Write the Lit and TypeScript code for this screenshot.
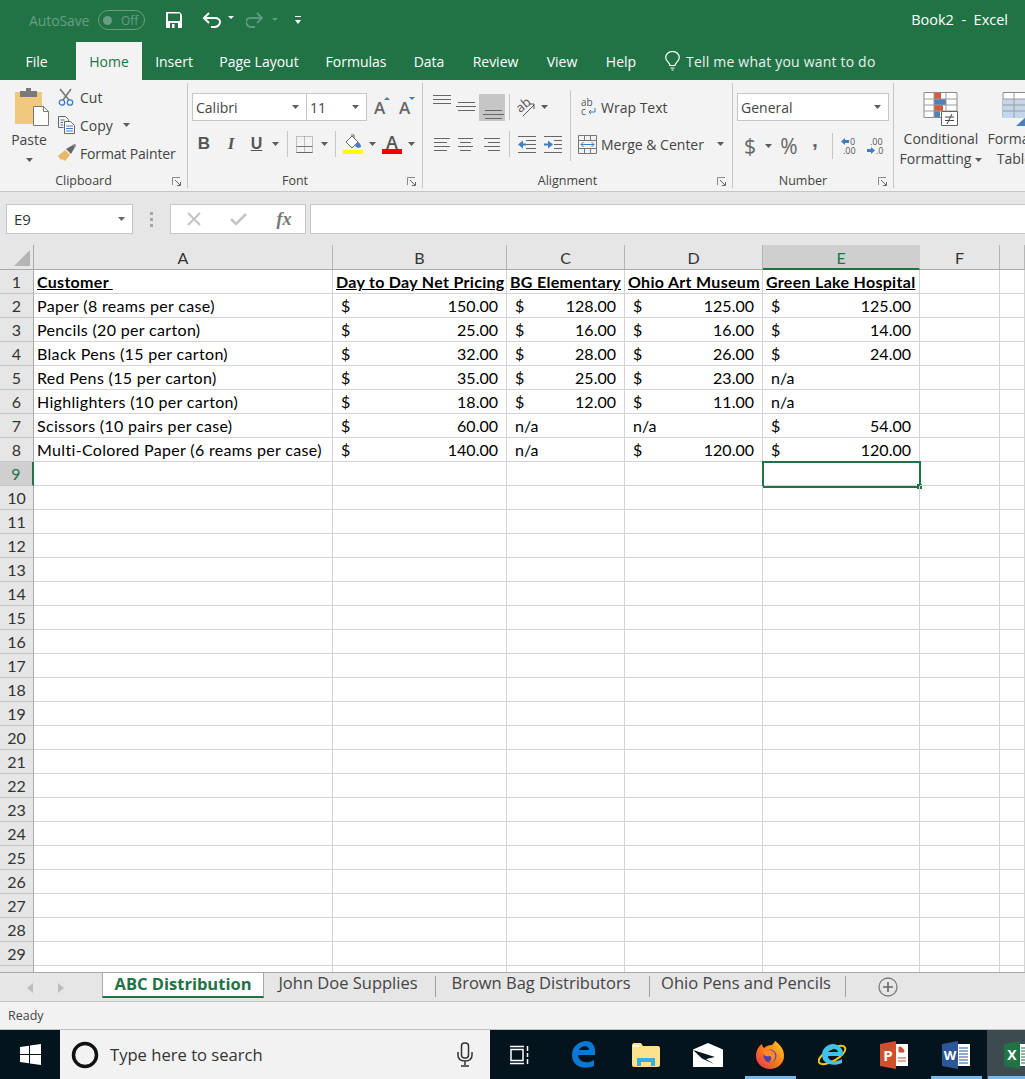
import { LitElement, css, html, svg } from 'lit';
import { customElement } from 'lit/decorators.js';

interface SheetRow {
  name: string;
  cells: (number | null)[];
}

const COLS = ['A', 'B', 'C', 'D', 'E', 'F', 'G'];

const ROWS: SheetRow[] = [
  { name: 'Paper (8 reams per case)', cells: [150, 128, 125, 125] },
  { name: 'Pencils (20 per carton)', cells: [25, 16, 16, 14] },
  { name: 'Black Pens (15 per carton)', cells: [32, 28, 26, 24] },
  { name: 'Red Pens (15 per carton)', cells: [35, 25, 23, null] },
  { name: 'Highlighters (10 per carton)', cells: [18, 12, 11, null] },
  { name: 'Scissors (10 pairs per case)', cells: [60, null, null, 54] },
  { name: 'Multi-Colored Paper (6 reams per case)', cells: [140, null, 120, 120] },
];

const HEADINGS = ['Customer ', 'Day to Day Net Pricing', 'BG Elementary', 'Ohio Art Museum', 'Green Lake Hospital'];

const caret = (fill = '#5c5c5c') => html`<svg class="caret" width="7" height="4" viewBox="0 0 7 4"><path d="M0 0h7L3.5 4z" fill=${fill}></path></svg>`;

const lines = (ys: number[][], w = 26, h = 28) => html`<svg width=${w} height=${h} viewBox="0 0 ${w} ${h}">
  ${ys.map(([x1, x2, y]) => svg`<rect x=${x1} y=${y} width=${x2 - x1} height="1" fill="#666"></rect>`)}
</svg>`;

const launcher = html`<svg class="launcher" width="10" height="10" viewBox="0 0 10 10">
  <path d="M.5 8V.5H8" fill="none" stroke="#8a8a8a"></path><path d="M3 3l5 5M5 8.500h3.500V5" fill="none" stroke="#666"></path>
</svg>`;

@customElement('app-root')
export class AppRoot extends LitElement {
  static styles = css`
    :host {
      display: block;
      width: 1025px;
      height: 1079px;
      overflow: hidden;
      position: relative;
      font-family: 'Open Sans', 'Noto Sans', sans-serif;
      color: #444;
      background: #fff;
    }
    svg { display: block; flex: none; }
    .titlebar {
      height: 40px;
      background: #217346;
      display: flex;
      align-items: center;
      padding: 0 17px 0 29px;
      color: #fff;
      font-size: 14px;
    }
    .autosave { color: #6a9e83; width: 69px; white-space: nowrap; letter-spacing: -0.1px; }
    .toggle {
      width: 47px;
      height: 20px;
      box-sizing: border-box;
      border: 1px solid #6a9e83;
      border-radius: 10px;
      color: #6a9e83;
      font-size: 12px;
      display: flex;
      align-items: center;
      gap: 9px;
      padding-left: 4px;
    }
    .toggle i { width: 9px; height: 9px; border-radius: 50%; background: #6a9e83; }
    .qat { display: grid; grid-template-columns: 36px 44px 26px 23px 6px; margin-left: 21px; align-items: center; justify-items: start; }
    .doc-title { margin-left: auto; white-space: pre; font-size: 14.5px; padding-bottom: 2px; }
    .tabs {
      height: 40px;
      background: #217346;
      display: grid;
      grid-template-columns: 76px 66px 64px 106px 88px 58px 75px 58px 60px 14px auto;
      align-items: end;
      color: #fff;
      font-size: 14px;
    }
    .tab { height: 38px; display: flex; align-items: center; justify-content: center; white-space: nowrap; box-sizing: border-box; }
    .tab.file { padding-right: 3px; }
    .tab.active { background: #f3f3f3; color: #217346; }
    .tell { display: flex; align-items: center; gap: 6px; height: 38px; white-space: nowrap; box-sizing: border-box; color: #e9f1ec; letter-spacing: 0.2px; }
    .ribbon {
      height: 112px;
      box-sizing: border-box;
      padding-top: 3px;
      background: #f3f3f3;
      border-bottom: 1px solid #c6c6c6;
      display: grid;
      grid-template-columns: 188px 235px 310px 161px 131px;
      font-size: 14px;
      color: #444;
    }
    .group {
      height: 105px;
      border-right: 1px solid #c6c6c6;
      box-sizing: border-box;
      display: grid;
      grid-template-rows: 91px 14px;
      position: relative;
    }
    .group.last { border-right: none; overflow: hidden; }
    .group-label { text-align: center; font-size: 12.5px; line-height: 14px; color: #444; padding-right: 20px; }
    .launcher { position: absolute; right: 5px; bottom: 1px; }
    .clip { display: grid; grid-template-columns: 58px auto; }
    .paste { display: flex; flex-direction: column; align-items: center; padding-top: 5px; }
    .paste svg:first-child { margin-left: 6px; }
    .paste span { margin-top: 3px; line-height: 20px; }
    .paste .caret { margin-top: 8px; }
    .small { display: grid; grid-template-rows: repeat(3, 28px); }
    .small div { display: flex; align-items: center; white-space: nowrap; }
    .small svg:first-child { width: 22px; }
    .small .caret { margin-left: 10px; }
    .small .painter { letter-spacing: -0.15px; }
    .rows { padding-top: 10px; display: grid; grid-template-rows: 28px 28px; row-gap: 9px; align-content: start; }
    .combo {
      background: #fff;
      border: 1px solid #c6c6c6;
      box-sizing: border-box;
      height: 28px;
      display: flex;
      align-items: center;
      justify-content: space-between;
      padding: 0 7px 0 3px;
      color: #444;
    }
    .font-top { display: grid; grid-template-columns: 115px 60px 7px 15px 10px 15px; padding-left: 4px; align-items: center; }
    .combo.second { margin-left: -1px; }
    .tools { display: grid; align-items: center; justify-items: center; }
    .font-tools { grid-template-columns: 26px 28px 23px 15px 8px 27px 13px 8px 28px 10px 30px 8px; padding-left: 3px; }
    .b { font-weight: 700; font-size: 17px; color: #555; font-family: 'Liberation Sans', sans-serif; }
    .i { font-style: italic; font-weight: 700; font-size: 17px; color: #555; font-family: 'Liberation Serif', serif; }
    .u { font-weight: 700; font-size: 16px; color: #555; text-decoration: underline; font-family: 'Liberation Sans', sans-serif; }
    .vsep { width: 1px; height: 26px; background: #c6c6c6; }
    .align { display: grid; grid-template-columns: 147px 1px auto; }
    .align-top { grid-template-columns: 24px 25px 27px 8px 26px 10px; padding-left: 6px; justify-content: start; }
    .align-bottom { grid-template-columns: 24px 25px 27px 8px 27px 26px; padding-left: 6px; justify-content: start; }
    .picked { background: #c6c6c6; width: 26px; height: 27px; }
    .tall { width: 1px; height: 71px; margin-top: 7px; background: #c6c6c6; }
    .wrap { display: flex; align-items: center; gap: 5px; padding-left: 10px; white-space: nowrap; }
    .merge { display: flex; align-items: center; gap: 4px; padding-left: 7px; white-space: nowrap; }
    .merge .caret { margin-left: 9px; }
    .num-combo { margin-left: 4px; width: 152px; }
    .num-tools { grid-template-columns: 16px 20px 22px 30px 4px 30px 23px; padding-left: 9px; justify-content: start; }
    .glyph { font-size: 21px; color: #666; line-height: 28px; }
    .comma { font-family: 'Liberation Sans', sans-serif; font-weight: 700; font-size: 21px; color: #666; line-height: 20px; margin-bottom: 12px; }
    .styles { display: grid; grid-template-columns: 94px 64px; justify-content: start; }
    .style-btn { display: flex; flex-direction: column; align-items: center; padding-top: 9px; line-height: 20px; white-space: nowrap; }
    .style-btn svg.big { margin-bottom: 3px; }
    .style-btn .caret { display: inline-block; margin-left: 4px; vertical-align: middle; }
    .fbar {
      height: 53px;
      background: #e6e6e6;
      display: flex;
      padding: 12px 0 0 6px;
      box-sizing: border-box;
    }
    .field { height: 30px; box-sizing: border-box; background: #fff; border: 1px solid #c6c6c6; display: flex; align-items: center; }
    .namebox { width: 127px; justify-content: space-between; padding: 0 7px 0 7px; font-size: 15px; color: #333; }
    .dots { width: 37px; display: flex; flex-direction: column; align-items: center; justify-content: center; gap: 3px; height: 30px; }
    .dots i { width: 3px; height: 3px; background: #a8a8a8; }
    .fbtns { width: 136px; display: grid; grid-template-columns: 45px 45px 46px; justify-items: center; margin-right: 4px; color: #666; }
    .fx { font-family: 'Liberation Serif', serif; font-style: italic; font-weight: 700; font-size: 18px; color: #777; }
    .finput { flex: 1; border-right: none; }
    .sheet {
      height: 727px;
      overflow: hidden;
      display: grid;
      grid-template-columns: 34px 299px 174px 118px 138px 157px 80px 25px;
      grid-auto-rows: 24px;
      grid-template-rows: 25px;
      font-family: Lato, 'Open Sans', sans-serif;
      font-size: 16px;
      color: #000;
      background: #fff;
    }
    .corner { background: #e6e6e6; border-right: 1px solid #a9a9a9; border-bottom: 1px solid #a9a9a9; box-sizing: border-box; padding: 5px 0 0 14px; }
    .colhead {
      background: #e6e6e6;
      border-right: 1px solid #b5b5b5;
      border-bottom: 1px solid #a9a9a9;
      box-sizing: border-box;
      text-align: center;
      line-height: 25px;
      color: #333;
    }
    .colhead.sel { background: #cfcfcf; color: #217346; border-bottom: 2px solid #217346; border-right-color: #cfcfcf; }
    .rowhead {
      background: #e6e6e6;
      border-right: 1px solid #a9a9a9;
      border-bottom: 1px solid #c6c6c6;
      box-sizing: border-box;
      display: flex;
      align-items: center;
      justify-content: center;
      color: #333;
    }
    .rowhead.sel { background: #cfcfcf; color: #217346; border-right: 2px solid #217346; }
    .cell {
      border-right: 1px solid #d4d4d4;
      border-bottom: 1px solid #d4d4d4;
      box-sizing: border-box;
      display: flex;
      align-items: center;
      padding: 0 8px 0 8px;
      white-space: pre;
      position: relative;
    }
    .cell.text { padding-left: 3px; letter-spacing: 0.33px; }
    .cell.head { padding-left: 3px; font-weight: 700; text-decoration: underline; letter-spacing: 0.3px; }
    .money { justify-content: space-between; }
    .selbox {
      position: absolute;
      left: -1px;
      top: -1px;
      right: -2px;
      bottom: -3px;
      border: 2px solid #217346;
      box-sizing: border-box;
    }
    .selbox i {
      position: absolute;
      right: -3px;
      bottom: -3px;
      width: 5px;
      height: 5px;
      background: #217346;
    }
    .sheetbar {
      height: 30px;
      box-sizing: border-box;
      background: #e6e6e6;
      border-top: 1px solid #a9a9a9;
      border-bottom: 1px solid #c6c6c6;
      display: flex;
      font-size: 16.5px;
      color: #444;
    }
    .nav { width: 102px; display: flex; gap: 25px; padding: 10px 0 0 27px; box-sizing: border-box; }
    .stab-list { display: grid; grid-template-columns: 162px 172px 214px 196px auto; align-items: start; }
    .stab-active {
      height: 25px;
      box-sizing: border-box;
      display: flex;
      align-items: center;
      justify-content: center;
      white-space: nowrap;
      padding-bottom: 3px;
      background: #fff;
      border-left: 1px solid #a9a9a9;
      border-right: 1px solid #a9a9a9;
      border-bottom: 2px solid #217346;
      color: #217346;
      font-weight: 700;
    }
    .stab {
      height: 21px;
      margin-top: 3px;
      line-height: 14px;
      box-sizing: border-box;
      text-align: center;
      white-space: nowrap;
      padding-right: 3px;
      border-right: 1px solid #a0a0a0;
    }
    .plus { padding: 4px 0 0 32px; }
    .status {
      height: 27px;
      background: #f2f2f2;
      display: flex;
      align-items: center;
      padding-left: 8px;
      font-size: 12.5px;
      color: #444;
    }
    .taskbar { height: 50px; background: #03141c; border-top: 1px solid #c0c0c0; box-sizing: border-box; display: grid; grid-template-columns: 60px 430px 1px repeat(9, 62px); }
    .start { display: flex; align-items: center; justify-content: center; }
    .search { background: #f2f2f2; display: flex; align-items: center; padding-left: 11px; gap: 11px; font-size: 16.6px; color: #333; }
    .search span { flex: 1; }
    .search svg:last-child { margin-right: 17px; }
    .slot { display: flex; align-items: center; justify-content: center; position: relative; height: 49px; }
    .slot.open::after {
      content: '';
      position: absolute;
      left: 6px;
      right: 5px;
      bottom: 0;
      height: 3px;
      background: #76b9ed;
    }
    .slot.active { background: #3d4a50; }
    .slot.active::after { left: 1px; right: 0; }
    .slot.view { padding-right: 5px; box-sizing: border-box; }
  `;

  private renderRibbon() {
    return html`
      <div class="ribbon">
        <section class="group">
          <div class="clip">
            <div class="paste">
              <svg width="36" height="39" viewBox="0 0 36 39">
                <path d="M1 4h27v32H1z" fill="#f0c97f"></path>
                <path d="M6 3h17v6H6z" fill="#7a7a7a"></path><path d="M12 0h5v4h-5z" fill="#7a7a7a"></path>
                <path d="M19.500 18.500h10l5 5v14h-15z" fill="#fff" stroke="#7a7a7a"></path><path d="M29.500 18.500v5h5" fill="none" stroke="#7a7a7a"></path>
              </svg>
              <span>Paste</span>
              ${caret()}
            </div>
            <div class="small">
              <div>
                <svg viewBox="0 0 22 18" height="18"><path d="M2 1l9 11M13 1L5 12" stroke="#777" stroke-width="1.600" fill="none"></path><circle cx="4" cy="14.500" r="2.700" fill="none" stroke="#3f7fc1" stroke-width="1.300"></circle><circle cx="12" cy="14.500" r="2.700" fill="none" stroke="#3f7fc1" stroke-width="1.300"></circle></svg>
                Cut
              </div>
              <div>
                <svg viewBox="0 0 22 18" height="18"><path d="M.5.500h7l3 3v3M.5.500v11h5" fill="none" stroke="#666"></path><path d="M6.500 5.500h6l4 4v8h-10z" fill="#fff" stroke="#666"></path><path d="M8 10h7M8 12.500h7M8 15h7M2.500 4h4M2.500 6.500h2.500M2.500 9h2.500" stroke="#3f7fc1"></path></svg>
                Copy ${caret()}
              </div>
              <div class="painter">
                <svg viewBox="0 0 22 18" height="18"><path d="M0 12l7-6 5 5-5 6-3-2-1 1z" fill="#e8b866"></path><path d="M8 5l7-4 2 2-4 7z" fill="#666"></path><path d="M14 1l3-1 1 1-1 3z" fill="#888"></path></svg>
                Format Painter
              </div>
            </div>
          </div>
          <div class="group-label">Clipboard</div>
          ${launcher}
        </section>

        <section class="group">
          <div class="rows">
            <div class="font-top">
              <div class="combo"><span>Calibri</span>${caret()}</div>
              <div class="combo second"><span>11</span>${caret()}</div>
              <span></span>
              <svg width="16" height="28" viewBox="0 0 16 28"><text x="0" y="21" font-size="17" font-weight="600" fill="#666" font-family="Open Sans">A</text><path d="M10 7h6l-3-3z" fill="#3f7fc1"></path></svg>
              <span></span>
              <svg width="16" height="28" viewBox="0 0 16 28"><text x="0" y="21" font-size="17" font-weight="600" fill="#666" font-family="Open Sans">A</text><path d="M10 4h6l-3 3z" fill="#3f7fc1"></path></svg>
            </div>
            <div class="tools font-tools">
              <span class="b">B</span><span class="i">I</span><span class="u">U</span>${caret()}
              <div class="vsep"></div>
              <svg width="17" height="17" viewBox="0 0 17 17"><path d="M.5.500h16v16H.500zM8.500.500v16" fill="none" stroke="#8b8b8b" stroke-dasharray="1 1"></path><path d="M.5 10.500h16" stroke="#777"></path><path d="M.5 16.500h16" stroke="#666"></path></svg>
              ${caret()}
              <div class="vsep"></div>
              <svg width="20" height="20" viewBox="0 0 20 20"><path d="M3 8l6-6 6 6-6 6z" fill="#fff" stroke="#666"></path><path d="M8 1h3v3" fill="none" stroke="#666"></path><path d="M15 8c2 1 3 3 3 5l-3 1-3-2z" fill="#3f7fc1"></path><rect y="16" width="20" height="4" fill="#ffff00"></rect></svg>
              ${caret()}
              <svg width="20" height="20" viewBox="0 0 20 20"><text x="10" y="15" text-anchor="middle" font-size="18" font-weight="600" fill="#555" font-family="Open Sans">A</text><rect y="15" width="20" height="5" fill="#f00000"></rect></svg>
              ${caret()}
            </div>
          </div>
          <div class="group-label">Font</div>
          ${launcher}
        </section>

        <section class="group">
          <div class="align">
            <div class="rows">
              <div class="tools align-top">
                ${lines([[5, 23, 2], [5, 23, 6], [5, 23, 10]])}
                ${lines([[5, 22, 9], [3, 23, 13], [5, 22, 17]])}
                <div class="picked">${lines([[6, 23, 16], [4, 25, 20], [6, 23, 24]])}</div>
                <div class="vsep"></div>
                <svg width="20" height="19" viewBox="0 0 20 19"><text x="1" y="12" font-size="13" fill="#555" transform="rotate(-40 7 9)" font-family="Open Sans">ab</text><path d="M7 18L18 7M13 6h5v5" fill="none" stroke="#555"></path></svg>
                ${caret()}
              </div>
              <div class="tools align-bottom">
                ${lines([[6, 22, 8], [6, 19, 12], [6, 22, 16], [6, 19, 20]])}
                ${lines([[5, 20, 8], [7, 18, 12], [5, 20, 16], [7, 18, 20]])}
                ${lines([[5, 21, 8], [9, 21, 12], [5, 21, 16], [9, 21, 20]])}
                <div class="vsep"></div>
                <svg width="18" height="17" viewBox="0 0 18 17"><path d="M0 .5h18M8 4.500h10M8 8.500h10M8 12.500h10M0 16.500h18" stroke="#666"></path><path d="M0 8.500l5-4v3h3v2H5v3z" fill="#3f7fc1"></path></svg>
                <svg width="18" height="17" viewBox="0 0 18 17"><path d="M0 .5h18M10 4.500h8M10 8.500h8M10 12.500h8M0 16.500h18" stroke="#666"></path><path d="M9 8.500l-5-4v3H0v2h4v3z" fill="#3f7fc1"></path></svg>
              </div>
            </div>
            <div class="tall"></div>
            <div class="rows">
              <div class="wrap">
                <svg width="15" height="18" viewBox="0 0 15 18"><text x="0" y="8" font-size="10" fill="#555" font-family="Open Sans">ab</text><text x="0" y="17" font-size="10" fill="#555" font-family="Open Sans">c</text><path d="M14 10v4H8M10 12l-2 2 2 2" fill="none" stroke="#3f7fc1"></path></svg>
                Wrap Text
              </div>
              <div class="merge">
                <svg width="19" height="19" viewBox="0 0 19 19"><path d="M.5.500h18v18H.500zM.5 5.500h18M.5 13.500h18M6.500.500v5M12.500.500v5M6.500 13.500v5M12.500 13.500v5" fill="none" stroke="#777"></path><path d="M3 9.500h13M5.500 7l-2.500 2.500 2.500 2.500M13.500 7l2.500 2.500-2.500 2.500" fill="none" stroke="#3f7fc1"></path></svg>
                Merge &amp; Center ${caret()}
              </div>
            </div>
          </div>
          <div class="group-label">Alignment</div>
          ${launcher}
        </section>

        <section class="group">
          <div class="rows">
            <div class="combo num-combo"><span>General</span>${caret()}</div>
            <div class="tools num-tools">
              <span class="glyph">$</span>${caret()}<span class="glyph">%</span><span class="comma">,</span>
              <div class="vsep"></div>
              <svg width="16" height="18" viewBox="0 0 16 18"><path d="M0 4.500L4 1v2h4v3H4v2z" fill="#3f7fc1"></path><text x="9" y="8" font-size="9" fill="#555" font-family="Open Sans">0</text><text x="2" y="17" font-size="9" fill="#555" font-family="Open Sans">.00</text></svg>
              <svg width="18" height="18" viewBox="0 0 18 18"><text x="3" y="8" font-size="9" fill="#555" font-family="Open Sans">.00</text><path d="M8 13.500L4 10v2H0v3h4v2z" fill="#3f7fc1"></path><text x="9" y="17" font-size="9" fill="#555" font-family="Open Sans">.0</text></svg>
            </div>
          </div>
          <div class="group-label">Number</div>
          ${launcher}
        </section>

        <section class="group last">
          <div class="styles">
            <div class="style-btn">
              <svg class="big" width="36" height="34" viewBox="0 0 36 34">
                <path d="M1 .5h33v25H1z" fill="#fff" stroke="#8a8a8a"></path>
                <path d="M11 1h7v6h-7z" fill="#d9593c"></path><path d="M11 7h12v6H11z" fill="#4d82b8"></path>
                <path d="M11 13h9v6h-9z" fill="#d9593c"></path><path d="M11 19h6v6h-6z" fill="#4d82b8"></path>
                <path d="M1 7h33M1 13h33M1 19h33M11 1v25M23 1v25" fill="none" stroke="#9b9b9b"></path>
                <path d="M18.500 19.500h16v14h-16z" fill="#fff" stroke="#666"></path>
                <path d="M22 25h9M22 28.500h9M29 22l-5 10" stroke="#444" fill="none"></path>
              </svg>
              <span>Conditional</span>
              <span>Formatting${caret()}</span>
            </div>
            <div class="style-btn">
              <svg class="big" width="36" height="34" viewBox="0 0 36 34">
                <path d="M1 .5h34v25H1z" fill="#fff" stroke="#8a8a8a"></path><path d="M1 7h34v19H1z" fill="#c3d7ea"></path>
                <path d="M1 7h34M1 13h34M1 19h34M12 1v25M24 1v25" stroke="#9b9b9b" fill="none"></path>
                <path d="M14 34l12-11 10 8v3z" fill="#4d82b8"></path>
              </svg>
              <span>Format as</span>
              <span>Table${caret()}</span>
            </div>
          </div>
        </section>
      </div>
    `;
  }

  private renderSheet() {
    const rowNumbers = Array.from({ length: 30 }, (_, i) => i + 1);
    return html`
      <div class="sheet">
        <div class="corner"><svg width="16" height="16" viewBox="0 0 16 16"><path d="M16 0v16H0z" fill="#b4b4b4"></path></svg></div>
        ${COLS.map((c) => html`<div class="colhead ${c === 'E' ? 'sel' : ''}">${c === 'G' ? '' : c}</div>`)}
        ${rowNumbers.map((n) => this.renderRow(n))}
      </div>
    `;
  }

  private renderRow(n: number) {
    const head = html`<div class="rowhead ${n === 9 ? 'sel' : ''}">${n}</div>`;
    if (n === 1) {
      return html`${head}
        ${HEADINGS.map((h) => html`<div class="cell head">${h}</div>`)}
        <div class="cell"></div><div class="cell"></div>`;
    }
    const data = ROWS[n - 2];
    if (!data) {
      return html`${head}
        ${COLS.map((_, i) => html`<div class="cell">${n === 9 && i === 4 ? html`<div class="selbox"><i></i></div>` : ''}</div>`)}`;
    }
    return html`${head}
      <div class="cell text">${data.name}</div>
      ${data.cells.map((v) =>
        v === null
          ? html`<div class="cell">n/a</div>`
          : html`<div class="cell money"><span>$</span><span>${v.toFixed(2)}</span></div>`,
      )}
      <div class="cell"></div><div class="cell"></div>`;
  }

  private renderTaskbar() {
    return html`
      <div class="taskbar">
        <div class="start">
          <svg width="21" height="21" viewBox="0 0 21 21"><path d="M0 3l9-1.300V10H0zM10 1.500L21 0v10H10zM0 11h9v8.300L0 18zM10 11h11v10l-11-1.500z" fill="#fff"></path></svg>
        </div>
        <div class="search">
          <svg width="28" height="28" viewBox="0 0 28 28"><circle cx="14" cy="14" r="11.500" fill="none" stroke="#111" stroke-width="3.500"></circle></svg>
          <span>Type here to search</span>
          <svg width="16" height="26" viewBox="0 0 16 26"><rect x="4.500" y="1" width="7" height="15" rx="3" fill="none" stroke="#333" stroke-width="1.500"></rect><path d="M1 10v3c0 4 3 6 7 6s7-2 7-6v-3M8 19v4M4 24h8" fill="none" stroke="#333" stroke-width="1.500"></path></svg>
        </div>
        <div></div>
        <div class="slot view">
          <svg width="20" height="20" viewBox="0 0 20 20"><path d="M1 4.500h12v11H1zM0 1.500h14M0 18.500h14M17.500 1v5M17.500 8v4M17.500 14v5" fill="none" stroke="#fff" stroke-width="1.500"></path></svg>
        </div>
        <div class="slot">
          <svg width="26" height="27" viewBox="0 0 26 27"><path d="M24 14H7c0 6 8 10 16 5v6c-10 4-22 1-22-11C1 5 9 0 15 0c7 0 10 6 9 14zM8 9h10c0-5-8-5-10 0z" fill="#0a78d4"></path></svg>
        </div>
        <div class="slot">
          <svg width="28" height="24" viewBox="0 0 28 24"><path d="M0 2c0-1 1-2 2-2h7l2 3h15c1 0 2 1 2 2v17c0 1-1 2-2 2H2c-1 0-2-1-2-2z" fill="#fde28c"></path><path d="M1 3h6" stroke="#fff" stroke-width="2"></path><path d="M5 23V15h18v8h-4v-4H9v4z" fill="#35b1ea"></path></svg>
        </div>
        <div class="slot">
          <svg width="30" height="24" viewBox="0 0 30 24"><path d="M0 6.500L15 0l15 6.500V24H0z" fill="#fff"></path><path d="M0 7l22 7-9 2 8 5L9 15.500z" fill="#03141c"></path></svg>
        </div>
        <div class="slot open">
          <svg width="28" height="28" viewBox="0 0 28 28">
            <defs><linearGradient id="fox" x1="1" y1="0" x2="0" y2="1"><stop offset="0" stop-color="#ffd028"></stop><stop offset=".5" stop-color="#ff7a1f"></stop><stop offset="1" stop-color="#e5304f"></stop></linearGradient></defs>
            <path d="M19 0c6 4 9 9 9 15a14 13 0 0 1-28 0C0 9 3 5 6 3c0 2 1 3 2 4 2-2 5-3 8-3 1-1 2-2 3-4z" fill="url(#fox)"></path>
            <circle cx="14" cy="15" r="6.500" fill="#4e3fb0"></circle>
            <path d="M7 11c4-3 10-3 12 2 1 5-2 9-6 8 3-2 3-5 1-6-4 1-6 0-7-4z" fill="#ff8a1f"></path>
          </svg>
        </div>
        <div class="slot">
          <svg width="29" height="29" viewBox="0 0 29 29"><ellipse cx="14" cy="15" rx="15" ry="6" fill="none" stroke="#f2c811" stroke-width="2" transform="rotate(-30 14 15)"></ellipse><path d="M25 16H10c0 5 8 7 14 3v4C15 27 4 24 4 15 4 8 10 4 15 4c6 0 11 5 10 12zM10 12h10c0-4-8-4-10 0z" fill="#41c1ee"></path></svg>
        </div>
        <div class="slot">
          <svg width="28" height="28" viewBox="0 0 28 28"><path d="M16 3h12v22H16z" fill="#fff"></path><path d="M19 6a5 5 0 0 1 5 5h-5zM18 17h8M18 20h8" stroke="#d04f2c" fill="#d04f2c"></path><path d="M16 0L0 3v22l16 3z" fill="#d04f2c"></path><text x="8" y="20" text-anchor="middle" font-size="15" font-weight="700" fill="#fff" font-family="Open Sans">P</text></svg>
        </div>
        <div class="slot open">
          <svg width="28" height="28" viewBox="0 0 28 28"><path d="M15 3h13v22H15z" fill="#fff"></path><path d="M17 7h9M17 10h9M17 13h9M17 16h9M17 19h9M17 22h9" stroke="#2b579a"></path><path d="M16 0L0 3v22l16 3z" fill="#2b579a"></path><text x="8" y="19" text-anchor="middle" font-size="13" font-weight="700" fill="#fff" font-family="Open Sans">W</text></svg>
        </div>
        <div class="slot active open">
          <svg width="28" height="28" viewBox="0 0 28 28"><path d="M15 3h13v22H15z" fill="#fff"></path><path d="M17 7h9M17 10h9M17 13h9M17 16h9M17 19h9M17 22h9M22 3v22" stroke="#217346"></path><path d="M16 0L0 3v22l16 3z" fill="#217346"></path><text x="8" y="19" text-anchor="middle" font-size="14" font-weight="700" fill="#fff" font-family="Open Sans">X</text></svg>
        </div>
      </div>
    `;
  }

  render() {
    return html`
      <div class="titlebar">
        <span class="autosave">AutoSave</span>
        <span class="toggle"><i></i>Off</span>
        <div class="qat">
          <svg width="16" height="16" viewBox="0 0 16 16"><path d="M1 0h12.500L16 2.500V15a1 1 0 0 1-1 1H1a1 1 0 0 1-1-1V1a1 1 0 0 1 1-1z" fill="#fff"></path><path d="M2 1.500h12V9H2z" fill="#217346"></path><path d="M4 11h8v5H4z" fill="#217346"></path><path d="M6 12h2.500v4H6z" fill="#fff"></path></svg>
          <svg width="32" height="16" viewBox="0 0 32 16"><path d="M2 6h11c3 0 5 2 5 4s-2 5-5 5H9" fill="none" stroke="#fff" stroke-width="2"></path><path d="M7 1L2 6l5 5" fill="none" stroke="#fff" stroke-width="2"></path><path d="M26 4h6l-3 3z" fill="#fff"></path></svg>
          <svg width="18" height="16" viewBox="0 0 18 16"><path d="M16 6H5c-3 0-5 2-5 4s2 5 5 5h4" fill="none" stroke="#5f9a7d" stroke-width="2"></path><path d="M11 1l5 5-5 5" fill="none" stroke="#5f9a7d" stroke-width="2"></path></svg>
          <svg width="7" height="16" viewBox="0 0 7 16"><path d="M0 6h6l-3 3z" fill="#5f9a7d"></path></svg>
          <svg width="6" height="9" viewBox="0 0 6 9"><path d="M0 0h6v1H0zM0 4h6L3 8z" fill="#fff"></path></svg>
        </div>
        <span class="doc-title">Book2  -  Excel</span>
      </div>
      <div class="tabs">
        <div class="tab file">File</div>
        <div class="tab active">Home</div>
        <div class="tab">Insert</div>
        <div class="tab">Page Layout</div>
        <div class="tab">Formulas</div>
        <div class="tab">Data</div>
        <div class="tab">Review</div>
        <div class="tab">View</div>
        <div class="tab">Help</div>
        <span></span>
        <div class="tell">
          <svg width="15" height="20" viewBox="0 0 15 20"><path d="M5 14.500c0-3-4.300-4-4.300-8a6.800 6 0 0 1 13.600 0c0 4-4.300 5-4.300 8zM5.500 17h4M6.500 19h2" fill="none" stroke="#fff" stroke-width="1.200"></path></svg>
          Tell me what you want to do
        </div>
      </div>
      ${this.renderRibbon()}
      <div class="fbar">
        <div class="field namebox"><span>E9</span>${caret('#666')}</div>
        <div class="dots"><i></i><i></i><i></i></div>
        <div class="field fbtns">
          <svg width="16" height="14" viewBox="0 0 16 14"><path d="M2 1l12 12M14 1L2 13" stroke="#c4c4c4" stroke-width="2"></path></svg>
          <svg width="17" height="14" viewBox="0 0 17 14"><path d="M1 7l5 5L16 2" fill="none" stroke="#c4c4c4" stroke-width="2.500"></path></svg>
          <span class="fx">fx</span>
        </div>
        <div class="field finput"></div>
      </div>
      ${this.renderSheet()}
      <div class="sheetbar">
        <div class="nav">
          <svg width="6" height="10" viewBox="0 0 6 10"><path d="M6 0v10L0 5z" fill="#bdbdbd"></path></svg>
          <svg width="6" height="10" viewBox="0 0 6 10"><path d="M0 0v10l6-5z" fill="#bdbdbd"></path></svg>
        </div>
        <div class="stab-list">
          <div class="stab-active">ABC Distribution</div>
          <div class="stab">John Doe Supplies</div>
          <div class="stab">Brown Bag Distributors</div>
          <div class="stab">Ohio Pens and Pencils</div>
          <div class="plus">
            <svg width="20" height="20" viewBox="0 0 20 20"><circle cx="10" cy="10" r="9" fill="none" stroke="#7a7a7a" stroke-width="1.300"></circle><path d="M10 5v10M5 10h10" stroke="#666" stroke-width="1.600"></path></svg>
          </div>
        </div>
      </div>
      <div class="status">Ready</div>
      ${this.renderTaskbar()}
    `;
  }
}
